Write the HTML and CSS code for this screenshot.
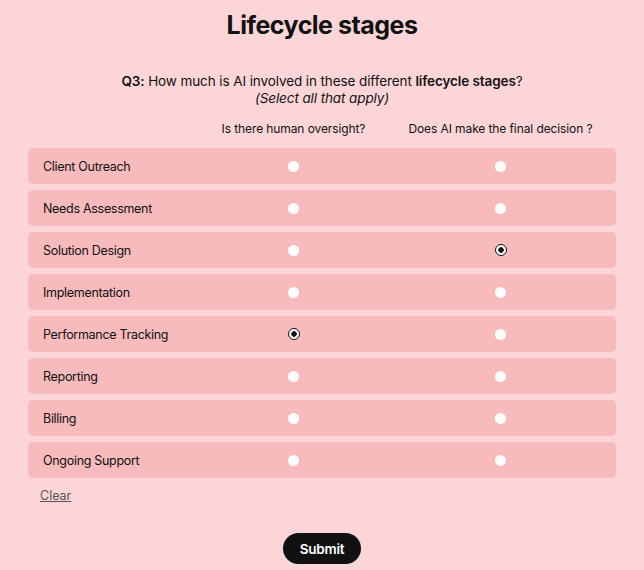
FILE: index.html
```html
<!DOCTYPE html>
<html lang="en">
<head>
    <meta charset="UTF-8">
    <meta name="viewport" content="width=device-width, initial-scale=1.0">
    <title>Lifecycle stages</title>
    <link rel="stylesheet" href="styles.css">
</head>
<body>
    <div class="container">
        <h1 class="title">Lifecycle stages</h1>
        <p class="question"><b>Q3:</b> How much is AI involved in these different <b>lifecycle stages</b>?<br><i>(Select all that apply)</i></p>

        <div class="grid-head">
            <span></span>
            <span>Is there human oversight?</span>
            <span>Does AI make the final decision ?</span>
        </div>

        <div class="stage-row">
            <span class="stage-name">Client Outreach</span>
            <span class="cell"><input type="radio" name="r1a"></span>
            <span class="cell"><input type="radio" name="r1b"></span>
        </div>
        <div class="stage-row">
            <span class="stage-name">Needs Assessment</span>
            <span class="cell"><input type="radio" name="r2a"></span>
            <span class="cell"><input type="radio" name="r2b"></span>
        </div>
        <div class="stage-row">
            <span class="stage-name">Solution Design</span>
            <span class="cell"><input type="radio" name="r3a"></span>
            <span class="cell"><input type="radio" name="r3b" checked></span>
        </div>
        <div class="stage-row">
            <span class="stage-name">Implementation</span>
            <span class="cell"><input type="radio" name="r4a"></span>
            <span class="cell"><input type="radio" name="r4b"></span>
        </div>
        <div class="stage-row">
            <span class="stage-name">Performance Tracking</span>
            <span class="cell"><input type="radio" name="r5a" checked></span>
            <span class="cell"><input type="radio" name="r5b"></span>
        </div>
        <div class="stage-row">
            <span class="stage-name">Reporting</span>
            <span class="cell"><input type="radio" name="r6a"></span>
            <span class="cell"><input type="radio" name="r6b"></span>
        </div>
        <div class="stage-row">
            <span class="stage-name">Billing</span>
            <span class="cell"><input type="radio" name="r7a"></span>
            <span class="cell"><input type="radio" name="r7b"></span>
        </div>
        <div class="stage-row">
            <span class="stage-name">Ongoing Support</span>
            <span class="cell"><input type="radio" name="r8a"></span>
            <span class="cell"><input type="radio" name="r8b"></span>
        </div>

        <a href="#" class="clear-link">Clear</a>

        <div class="actions">
            <button class="submit-button">Submit</button>
        </div>
    </div>
</body>
</html>
```

FILE: styles.css
```css
body {
    margin: 0;
    background-color: #fcd5d8;
    color: #111;
    font-family: 'Inter', sans-serif;
}
.container {
    padding: 0 28px;
}
.title {
    margin: 8px 0 0;
    text-align: center;
    font-size: 25px;
    font-weight: 700;
    letter-spacing: -0.5px;
    line-height: 34px;
}
.question {
    margin: 31px 0 0;
    text-align: center;
    font-size: 13.5px;
    line-height: 17px;
    letter-spacing: -0.1px;
}
.question b {
    font-weight: 600;
}
.grid-head, .stage-row {
    display: grid;
    grid-template-columns: 162px 207px 207px 1fr;
    align-items: center;
}
.grid-head {
    margin-top: 11px;
    margin-bottom: 10px;
    font-size: 12px;
    letter-spacing: -0.1px;
    height: 20px;
}
.grid-head span {
    text-align: center;
}
.stage-row {
    height: 36px;
    margin-bottom: 6px;
    background-color: #f7babd;
    border-radius: 5px;
    font-size: 12.5px;
    letter-spacing: -0.3px;
}
.stage-name {
    padding-left: 15px;
}
.cell {
    display: flex;
    justify-content: center;
}
.cell input {
    appearance: none;
    margin: 0;
    width: 11px;
    height: 11px;
    border-radius: 50%;
    background: #fff;
    cursor: pointer;
}
.cell input:checked {
    border: 1.5px solid #111;
    background: radial-gradient(circle, #111 0 2.5px, #fff 3px);
    width: 12px;
    height: 12px;
}
.clear-link {
    display: inline-block;
    margin: 4px 0 0 12px;
    color: #555;
    font-size: 12.5px;
}
.actions {
    display: flex;
    justify-content: center;
    margin-top: 29px;
}
.submit-button {
    background-color: #111;
    color: white;
    border: none;
    border-radius: 16px;
    height: 31px;
    padding: 0 17px;
    font-family: 'Inter', sans-serif;
    font-size: 13.5px;
    font-weight: 600;
    letter-spacing: -0.2px;
    cursor: pointer;
}
```
